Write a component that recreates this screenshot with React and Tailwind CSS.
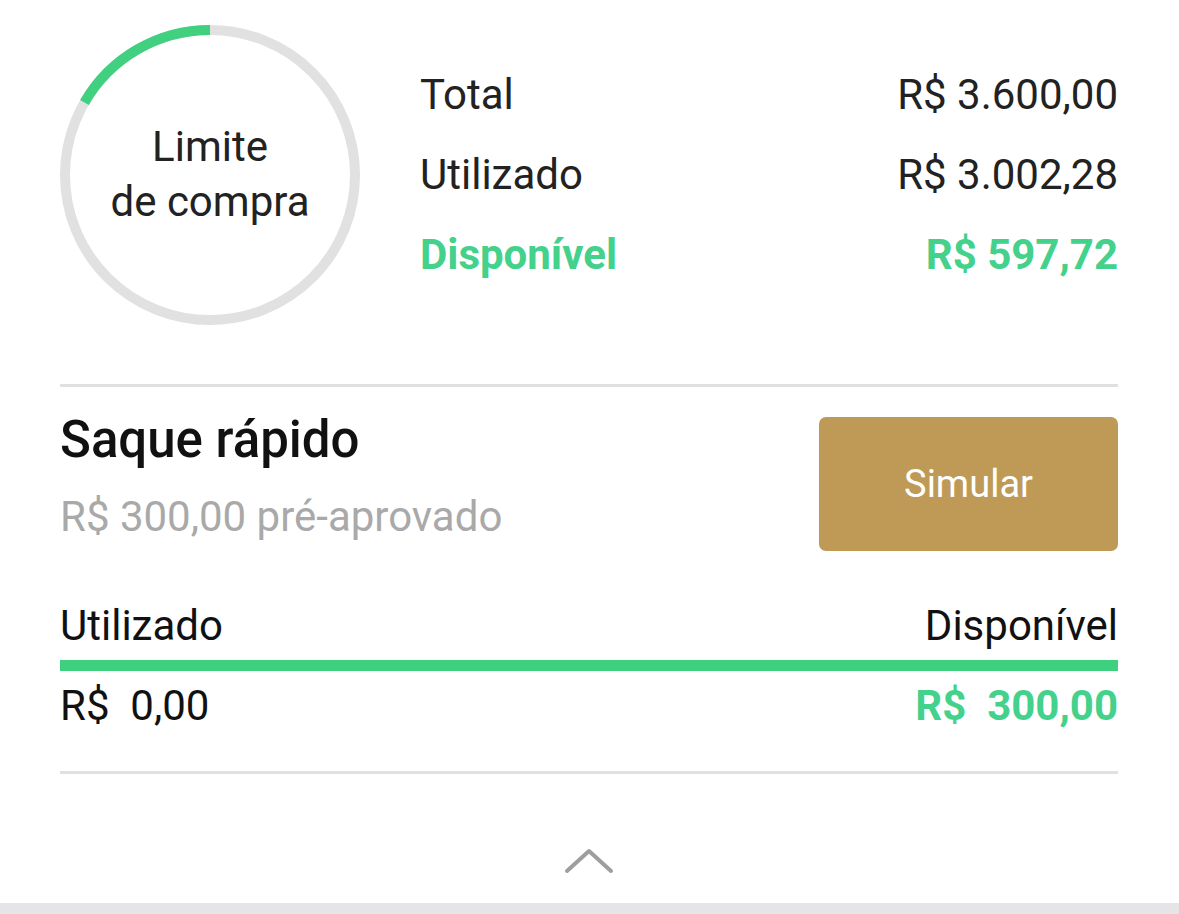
import React from 'react'

const green = '#40d080'

function Ring(){
  return (
    <div className="relative w-[300px] h-[300px] shrink-0">
      <svg width="300" height="300" viewBox="0 0 300 300" className="absolute inset-0">
        <circle cx="150" cy="150" r="145" fill="none" stroke="#e1e1e1" strokeWidth="10" />
        <path d="M150 5 A145 145 0 0 0 24.4 77.5" fill="none" stroke={green} strokeWidth="10" />
      </svg>
      <div className="absolute inset-0 flex flex-col items-center justify-center pb-[2px] text-[42px] leading-[55px] text-[#222]">
        <div>Limite</div>
        <div>de compra</div>
      </div>
    </div>
  )
}

function Row({ label, value, strong }){
  return (
    <div className={`flex justify-between leading-[80px] text-[42px] ${strong ? 'font-bold text-[#44d18b]' : 'text-[#222]'}`}>
      <span>{label}</span>
      <span>{value}</span>
    </div>
  )
}

export default function App(){
  return (
    <div className="w-[1179px] h-[914px] bg-white overflow-hidden flex flex-col" style={{ fontFamily: 'Roboto, "Noto Sans", sans-serif' }}>
      <div className="px-[60px] pr-[61px]">
        <div className="flex pt-[25px]">
          <Ring />
          <div className="flex-1 ml-[60px] mt-[30px]">
            <Row label="Total" value="R$ 3.600,00" />
            <Row label="Utilizado" value="R$ 3.002,28" />
            <Row label="Disponível" value="R$ 597,72" strong />
          </div>
        </div>

        <div className="mt-[59px] h-[3px] bg-[#e0e0e0]" />

        <div className="flex justify-between items-start pt-[30px]">
          <div>
            <div className="text-[51px] leading-[46px] font-medium text-[#111]">Saque rápido</div>
            <div className="mt-[31px] text-[42px] leading-[46px] text-[#a9a9a9]">R$ 300,00 pré-aprovado</div>
          </div>
          <button className="w-[299px] h-[134px] rounded-[7px] bg-[#bf9a56] text-white text-[38px]">Simular</button>
        </div>

        <div className="mt-[53px] flex justify-between text-[42px] leading-[44px] text-[#111]">
          <span>Utilizado</span>
          <span>Disponível</span>
        </div>
        <div className="mt-[12px] h-[11px] bg-[#3fd07f]" />
        <div className="mt-[13px] flex justify-between text-[42px] leading-[44px]">
          <span className="text-[#111] whitespace-pre">R$  0,00</span>
          <span className="font-bold text-[#44d18b] whitespace-pre">R$  300,00</span>
        </div>

        <div className="mt-[43px] h-[3px] bg-[#e0e0e0]" />

        <div className="mt-[74px] flex justify-center">
          <svg width="50" height="26" viewBox="0 0 50 26" fill="none">
            <path d="M3 23 L25 3 L47 23" stroke="#9e9e9e" strokeWidth="4" strokeLinecap="round" strokeLinejoin="round" />
          </svg>
        </div>
      </div>
      <div className="mt-[29px] h-[11px] bg-[#e5e5e8]" />
    </div>
  )
}
